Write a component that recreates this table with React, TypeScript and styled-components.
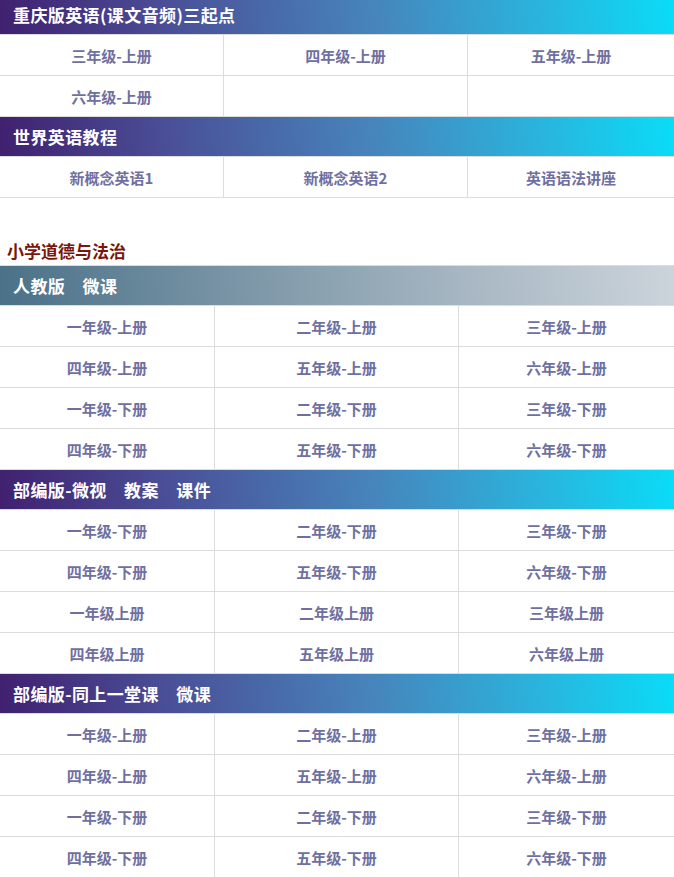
import React from "react";
import styled, { createGlobalStyle } from "styled-components";

const Global = createGlobalStyle`
  html, body { margin: 0; padding: 0; background: #fff; overflow: hidden; }
  body { font-family: "Noto Sans CJK SC", "Microsoft YaHei", sans-serif; }
`;

const Page = styled.div`
  width: 674px;
  margin-top: -5px;
  display: flex;
  flex-direction: column;
`;

const Header = styled.div<{ $tone: "blue" | "gray" }>`
  height: 39px;
  border-bottom: 1px solid #dcdcdc;
  display: flex;
  align-items: center;
  padding-left: 13px;
  color: #fff;
  font-size: 17px;
  font-weight: 700;
  letter-spacing: 0.4px;
  white-space: pre;
  background: ${(p) =>
    p.$tone === "blue"
      ? "linear-gradient(84deg, #40206f 0%, #4a4f97 25%, #4784bb 55%, #2ab4dd 80%, #0adcf7 100%)"
      : "linear-gradient(84deg, #4a7188 0%, #7a95a6 35%, #a6b6c2 68%, #ccd4db 100%)"};
`;

const Grid = styled.div<{ $cols: string }>`
  display: grid;
  grid-template-columns: ${(p) => p.$cols};
`;

const Cell = styled.div<{ $last: boolean }>`
  height: 40px;
  border-bottom: 1px solid #dcdcdc;
  border-right: ${(p) => (p.$last ? "none" : "1px solid #dcdcdc")};
  display: flex;
  align-items: center;
  justify-content: center;
  color: #6f70a0;
  font-size: 15px;
  font-weight: 700;
`;

const Title = styled.div`
  box-sizing: border-box;
  height: 68px;
  border-bottom: 1px solid #dcdcdc;
  display: flex;
  align-items: flex-end;
  padding: 0 0 2px 7px;
  color: #7a160c;
  font-size: 17px;
  font-weight: 700;
  line-height: 24px;
`;

type Sec = { title: string; tone: "blue" | "gray"; cells: string[] };

const Section = ({ s, cols }: { s: Sec; cols: string }) => (
  <>
    <Header $tone={s.tone}>{s.title}</Header>
    <Grid $cols={cols}>
      {s.cells.map((c, i) => (
        <Cell key={i} $last={i % 3 === 2}>
          {c}
        </Cell>
      ))}
    </Grid>
  </>
);

const top: Sec[] = [
  {
    title: "重庆版英语(课文音频)三起点",
    tone: "blue",
    cells: ["三年级-上册", "四年级-上册", "五年级-上册", "六年级-上册", "", ""],
  },
  {
    title: "世界英语教程",
    tone: "blue",
    cells: ["新概念英语1", "新概念英语2", "英语语法讲座"],
  },
];

const bottom: Sec[] = [
  {
    title: "人教版\u3000微课",
    tone: "gray",
    cells: [
      "一年级-上册", "二年级-上册", "三年级-上册",
      "四年级-上册", "五年级-上册", "六年级-上册",
      "一年级-下册", "二年级-下册", "三年级-下册",
      "四年级-下册", "五年级-下册", "六年级-下册",
    ],
  },
  {
    title: "部编版-微视\u3000教案\u3000课件",
    tone: "blue",
    cells: [
      "一年级-下册", "二年级-下册", "三年级-下册",
      "四年级-下册", "五年级-下册", "六年级-下册",
      "一年级上册", "二年级上册", "三年级上册",
      "四年级上册", "五年级上册", "六年级上册",
    ],
  },
  {
    title: "部编版-同上一堂课\u3000微课",
    tone: "blue",
    cells: [
      "一年级-上册", "二年级-上册", "三年级-上册",
      "四年级-上册", "五年级-上册", "六年级-上册",
      "一年级-下册", "二年级-下册", "三年级-下册",
      "四年级-下册", "五年级-下册", "六年级-下册",
    ],
  },
];

export default function App() {
  return (
    <>
      <Global />
      <Page>
        {top.map((s, i) => (
          <Section key={i} s={s} cols="224px 244px 206px" />
        ))}
        <Title>小学道德与法治</Title>
        {bottom.map((s, i) => (
          <Section key={i} s={s} cols="215px 244px 215px" />
        ))}
      </Page>
    </>
  );
}
